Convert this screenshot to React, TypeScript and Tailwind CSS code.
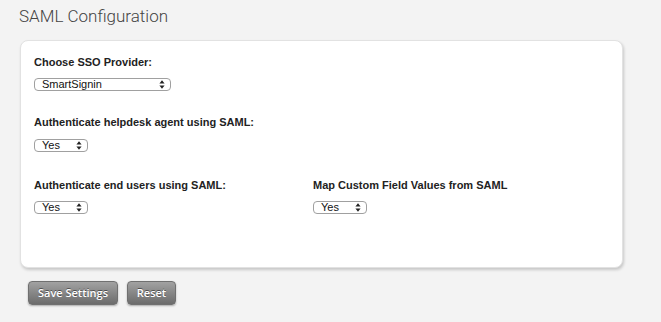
import React from 'react';

function FakeSelect({ value, width }: { value: string; width: string }) {
  return (
    <div
      className={`flex items-center justify-between h-[13px] rounded-[4px] border border-[#a0a0a0] bg-white pl-[7px] pr-[5px] text-[11px] leading-none text-[#111] ${width}`}
    >
      <span>{value}</span>
      <svg width="6" height="9" viewBox="0 0 6 9" className="text-[#222]">
        <path d="M3 0.3 L5.6 3.6 H0.4 Z" fill="currentColor" />
        <path d="M3 8.7 L5.6 5.4 H0.4 Z" fill="currentColor" />
      </svg>
    </div>
  );
}

function Field({ label, value, width, gap }: { label: string; value: string; width: string; gap: string }) {
  return (
    <div className="flex flex-col">
      <div className="text-[11px] font-bold leading-[13px] text-[#222]">{label}</div>
      <div className={gap}>
        <FakeSelect value={value} width={width} />
      </div>
    </div>
  );
}

export default function App() {
  return (
    <div
      className="w-[661px] h-[322px] bg-[#f3f3f3] overflow-hidden"
      style={{ fontFamily: '"Liberation Sans", Arial, sans-serif' }}
    >
      <div className="pl-[19px] pt-[6px]">
        <h1
          className="text-[17px] leading-[20px] font-light text-[#444]"
          style={{ fontFamily: 'Roboto, "Liberation Sans", sans-serif' }}
        >
          SAML Configuration
        </h1>
      </div>

      <div className="ml-[20px] mt-[14px] w-[603px] h-[228px] rounded-[8px] bg-white border border-[#e2e2e2] shadow-[1px_2px_3px_rgba(0,0,0,0.18)] pl-[13px] pt-[15px]">
        <Field label="Choose SSO Provider:" value="SmartSignin" width="w-[137px]" gap="mt-[9px]" />
        <div className="mt-[25px]">
          <Field label="Authenticate helpdesk agent using SAML:" value="Yes" width="w-[54px]" gap="mt-[10px]" />
        </div>
        <div className="mt-[27px] grid grid-cols-[279px_1fr]">
          <Field label="Authenticate end users using SAML:" value="Yes" width="w-[54px]" gap="mt-[9px]" />
          <Field label="Map Custom Field Values from SAML" value="Yes" width="w-[54px]" gap="mt-[9px]" />
        </div>
      </div>

      <div className="ml-[28px] mt-[13px] flex gap-[9px]">
        <button
          className="h-[24px] w-[90px] rounded-[4px] border border-[#707070] bg-gradient-to-b from-[#a2a2a2] to-[#6c6c6c] text-[11px] font-semibold text-white shadow-[0_1px_2px_rgba(0,0,0,0.3)] [text-shadow:0_-1px_0_rgba(0,0,0,0.45)]"
          style={{ fontFamily: '"Open Sans", sans-serif' }}
        >
          Save Settings
        </button>
        <button
          className="h-[24px] w-[49px] rounded-[4px] border border-[#707070] bg-gradient-to-b from-[#a2a2a2] to-[#6c6c6c] text-[11px] font-semibold text-white shadow-[0_1px_2px_rgba(0,0,0,0.3)] [text-shadow:0_-1px_0_rgba(0,0,0,0.45)]"
          style={{ fontFamily: '"Open Sans", sans-serif' }}
        >
          Reset
        </button>
      </div>
    </div>
  );
}
